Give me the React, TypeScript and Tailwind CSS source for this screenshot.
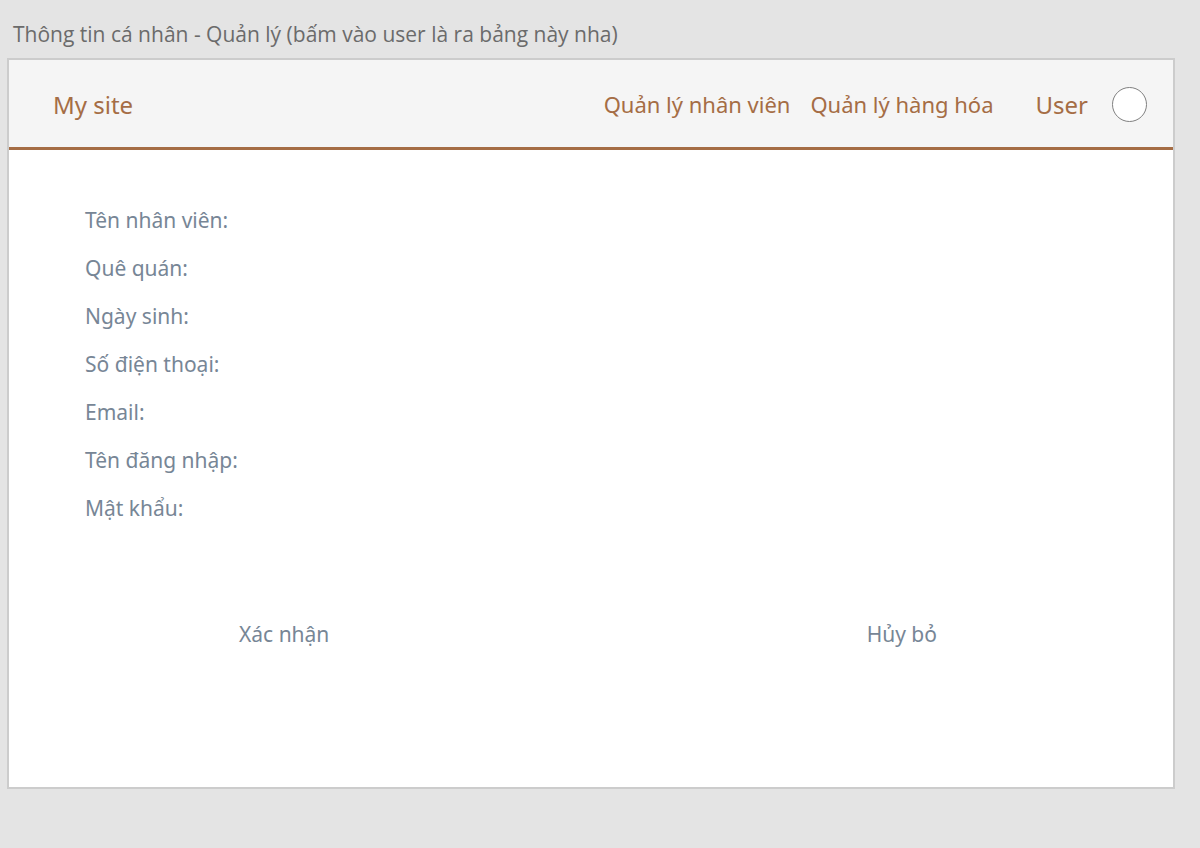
const fields = [
  "Tên nhân viên:",
  "Quê quán:",
  "Ngày sinh:",
  "Số điện thoại:",
  "Email:",
  "Tên đăng nhập:",
  "Mật khẩu:",
];

export default function App() {
  return (
    <div className="min-h-screen bg-[#e4e4e4] pt-4 pr-[25px] pb-[58px] pl-[7px] font-['Noto_Sans',sans-serif]">
      <h1 className="px-1.5 font-['Open_Sans',sans-serif] text-[21px] leading-9 text-[#6b6b6b]">
        Thông tin cá nhân - Quản lý (bấm vào user là ra bảng này nha)
      </h1>
      <div className="mt-1.5 border-2 border-[#cccccc] bg-white pb-[135px]">
        <header className="flex h-[90px] items-center border-b-3 border-[#a56d45] bg-[#f5f5f5] pt-0.5 pr-[26px] pl-11 text-[#a56d45]">
          <a href="#" className="text-2xl">My site</a>
          <nav className="ml-auto flex gap-5 text-[22px]">
            <a href="#">Quản lý nhân viên</a>
            <a href="#">Quản lý hàng hóa</a>
          </nav>
          <a href="#" className="ml-[42px] flex items-center gap-6 text-2xl">
            User
            <span className="size-[35px] rounded-full border border-[#808080] bg-white" />
          </a>
        </header>
        <main className="text-[21px] text-[#778696]">
          <dl className="mt-[47px] ml-[76px]">
            {fields.map((field) => (
              <div key={field} className="flex h-12 items-center">
                <dt>{field}</dt>
                <dd />
              </div>
            ))}
          </dl>
          <div className="mt-[83px] flex justify-between pr-[236px] pl-[230px] leading-9">
            <button type="button">Xác nhận</button>
            <button type="button">Hủy bỏ</button>
          </div>
        </main>
      </div>
    </div>
  );
}
